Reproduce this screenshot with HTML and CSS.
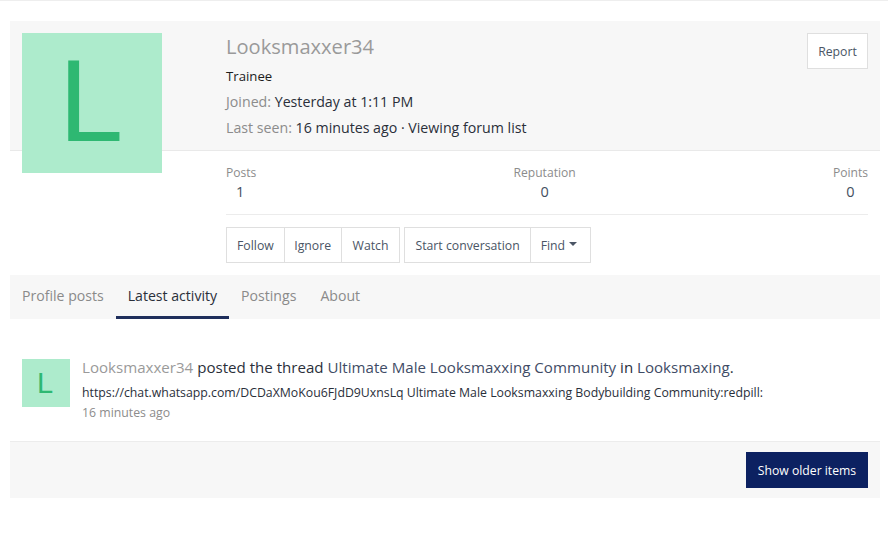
FILE: index.html
```html
<!DOCTYPE html>
<html lang="en">
<head>
<meta charset="utf-8">
<title>Looksmaxxer34</title>
<link rel="stylesheet" href="styles.css">
</head>
<body>
<div class="topline"></div>
<main class="page">
  <section class="profile">
    <div class="avatar-big">L</div>
    <header class="head">
      <div class="head-info">
        <h1 class="name">Looksmaxxer34</h1>
        <div class="title">Trainee</div>
        <div class="meta"><span class="muted">Joined:</span> Yesterday at 1:11 PM</div>
        <div class="meta"><span class="muted">Last seen:</span> 16 minutes ago · Viewing forum list</div>
      </div>
      <a class="btn report">Report</a>
    </header>
    <div class="body">
      <div class="stats">
        <div class="stat stat-left"><span class="stat-label">Posts</span><span class="stat-val val-posts">1</span></div>
        <div class="stat"><span class="stat-label">Reputation</span><span class="stat-val">0</span></div>
        <div class="stat"><span class="stat-label">Points</span><span class="stat-val">0</span></div>
      </div>
      <div class="actions">
        <div class="group">
          <a class="btn">Follow</a><a class="btn btn-ignore">Ignore</a><a class="btn btn-watch">Watch</a>
        </div>
        <div class="group">
          <a class="btn">Start conversation</a><a class="btn btn-find">Find <span class="caret"></span></a>
        </div>
      </div>
    </div>
  </section>
  <nav class="tabs">
    <a class="tab">Profile posts</a>
    <a class="tab active">Latest activity</a>
    <a class="tab">Postings</a>
    <a class="tab">About</a>
  </nav>
  <section class="activity">
    <div class="avatar-small">L</div>
    <div class="activity-text">
      <div class="line1"><a class="user">Looksmaxxer34</a> posted the thread <a class="link">Ultimate Male Looksmaxxing Community</a> in <a class="link">Looksmaxing</a>.</div>
      <div class="line2">https://chat.whatsapp.com/DCDaXMoKou6FJdD9UxnsLq Ultimate Male Looksmaxxing Bodybuilding Community:redpill:</div>
      <div class="line3">16 minutes ago</div>
    </div>
  </section>
  <footer class="foot">
    <a class="primary">Show older items</a>
  </footer>
</main>
</body>
</html>
```
FILE: styles.css
```css
* { box-sizing: border-box; }
html, body { margin: 0; padding: 0; background: #fff; }
body {
  font-family: "Open Sans", "Noto Sans", sans-serif;
  color: #2a2f3a;
  height: 533px;
  overflow: hidden;
}
.topline { height: 1px; background: #eeeeee; }
.page { margin: 20px 8px 0 10px; }
.profile { position: relative; }
.avatar-big {
  position: absolute;
  left: 12px;
  top: 12px;
  width: 140px;
  height: 140px;
  padding-right: 2px;
  background: #adebcc;
  color: #2eb872;
  font-family: "Liberation Sans", sans-serif;
  font-size: 116px;
  line-height: 137px;
  text-align: center;
}
.head {
  display: flex;
  justify-content: space-between;
  align-items: flex-start;
  height: 130px;
  padding: 12px 12px 0 216px;
  background: #f7f7f7;
  border-bottom: 1px solid #e9e9e9;
}
.name {
  margin: 0;
  font-size: 20.1px;
  line-height: 27px;
  font-weight: 400;
  color: #9a9a9a;
}
.title { font-size: 13.2px; line-height: 26px; margin-top: 3px; color: #1c1c1c; }
.meta { font-size: 14.2px; line-height: 26px; color: #2a2f3a; }
.muted { color: #8c8c8c; }
.btn {
  display: inline-flex;
  align-items: center;
  justify-content: center;
  height: 36px;
  padding: 0 10px;
  font-size: 12.25px;
  color: #4a5565;
  background: #fff;
  border: 1px solid #dfdfdf;
}
.report { width: 61px; padding: 0; flex: none; }
.btn-ignore { padding: 0 9.5px; }
.btn-watch { padding: 0 11px; }
.btn-find { padding: 0 13px 0 10px; }
.body { padding: 14px 12px 0 216px; }
.stats {
  display: flex;
  justify-content: space-between;
  height: 50px;
  border-bottom: 1px solid #ececec;
}
.stat { display: flex; flex-direction: column; align-items: center; }
.stat-label { font-size: 12.1px; line-height: 16px; color: #8c8c8c; }
.stat-val { font-size: 14.5px; line-height: 22px; color: #44505f; }
.stat-left { align-items: flex-start; }
.val-posts { margin-left: 10px; }
.actions { display: flex; gap: 4px; margin-top: 12px; }
.group { display: flex; }
.group .btn + .btn { border-left: 0; }
.caret {
  display: inline-block;
  width: 0;
  height: 0;
  margin-left: 4px;
  margin-bottom: 2px;
  border-left: 4px solid transparent;
  border-right: 4px solid transparent;
  border-top: 4px solid #4a5565;
}
.tabs {
  display: flex;
  height: 44px;
  margin-top: 12px;
  background: #f7f7f7;
}
.tab {
  display: flex;
  align-items: center;
  padding: 0 12px 4px;
  font-size: 14.1px;
  color: #8a8a8a;
}
.tab.active {
  color: #2a2f3a;
  border-bottom: 3px solid #1f2f5c;
  padding-bottom: 1px;
}
.activity {
  display: flex;
  gap: 12px;
  height: 123px;
  padding: 40px 12px 0;
  border-bottom: 1px solid #ececec;
}
.avatar-small {
  flex: none;
  width: 48px;
  height: 48px;
  padding-right: 2px;
  background: #adebcc;
  color: #2eb872;
  font-family: "Liberation Sans", sans-serif;
  font-size: 29px;
  line-height: 48px;
  text-align: center;
}
.line1 { font-size: 15.1px; line-height: 16px; color: #2a2f3a; white-space: nowrap; }
.user { color: #9a9a9a; }
.link { color: #3f4c66; }
.line2 { font-size: 12.3px; line-height: 20px; margin-top: 8px; color: #2a2f3a; white-space: nowrap; }
.line3 { font-size: 12.3px; line-height: 20px; color: #8c8c8c; }
.foot {
  display: flex;
  justify-content: flex-end;
  align-items: center;
  height: 56px;
  padding: 0 12px;
  background: #f7f7f7;
}
.primary {
  display: flex;
  align-items: center;
  justify-content: center;
  width: 122px;
  height: 36px;
  font-size: 12.2px;
  color: #fff;
  background: #0c2161;
}
```
